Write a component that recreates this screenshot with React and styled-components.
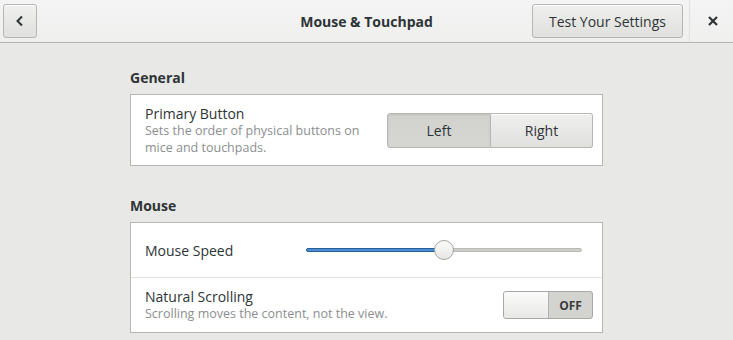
import React from "react";
import styled, { createGlobalStyle } from "styled-components";

const Global = createGlobalStyle`
  html, body { margin: 0; padding: 0; }
  body {
    background: #e8e8e7;
    font-family: "Open Sans", "Noto Sans", sans-serif;
    color: #2e3436;
    width: 733px;
    height: 340px;
    overflow: hidden;
  }
`;

const Window = styled.div`
  display: flex;
  flex-direction: column;
  width: 733px;
  height: 340px;
`;

const HeaderBar = styled.header`
  height: 42px;
  flex: none;
  display: flex;
  align-items: center;
  padding: 0 3px;
  background: linear-gradient(#f4f4f4, #efefee);
  border-bottom: 1px solid #b6b6b3;
  position: relative;
`;

const Button = styled.button`
  height: 34px;
  box-sizing: border-box;
  border: 1px solid #b6b6b3;
  border-radius: 3px;
  background: linear-gradient(#efefee, #e0e0dd);
  box-shadow: inset 0 1px #fff;
  font-family: inherit;
  font-size: 14px;
  color: #2e3436;
  display: flex;
  align-items: center;
  justify-content: center;
  padding: 0 ${(p) => p.$pad ?? 16}px;
  width: ${(p) => (p.$w ? p.$w + "px" : "auto")};
`;

const Title = styled.div`
  position: absolute;
  left: 0;
  right: 0;
  text-align: center;
  font-weight: 700;
  font-size: 14px;
  pointer-events: none;
`;

const Spacer = styled.div`
  flex: 1;
`;

const Separator = styled.div`
  width: 1px;
  align-self: stretch;
  margin: 0 6px 0 6px;
  background: #e0e0de;
`;

const CloseBtn = styled.div`
  width: 34px;
  display: flex;
  align-items: center;
  justify-content: center;
`;

const Content = styled.main`
  flex: 1;
  display: flex;
  flex-direction: column;
  align-items: center;
  padding-top: 26px;
`;

const Column = styled.div`
  width: 473px;
  display: flex;
  flex-direction: column;
`;

const SectionLabel = styled.div`
  font-weight: 700;
  font-size: 14px;
  line-height: 17px;
  margin-bottom: 8px;
  margin-top: ${(p) => p.$top || 0}px;
`;

const Frame = styled.div`
  background: #fff;
  border: 1px solid #b6b6b3;
  display: flex;
  flex-direction: column;
`;

const Row = styled.div`
  display: flex;
  align-items: center;
  padding: 0 9px 0 14px;
  height: ${(p) => p.$h}px;
  border-top: ${(p) => (p.$sep ? "1px solid #e2e2df" : "none")};
`;

const RowText = styled.div`
  flex: 1;
  display: flex;
  flex-direction: column;
  min-width: 0;
`;

const RowTitle = styled.div`
  font-size: 14px;
  line-height: 17px;
`;

const RowSub = styled.div`
  font-size: 12.5px;
  line-height: 17px;
  color: #8b8e8f;
  max-width: ${(p) => (p.$wrap ? "225px" : "none")};
`;

const Linked = styled.div`
  display: flex;
  height: 35px;
`;

const SegButton = styled.button`
  width: ${(p) => p.$w}px;
  box-sizing: border-box;
  border: 1px solid #b6b6b3;
  border-left-width: ${(p) => (p.$first ? 1 : 0)}px;
  border-radius: ${(p) => (p.$first ? "3px 0 0 3px" : "0 3px 3px 0")};
  background: ${(p) =>
    p.$active ? "linear-gradient(#d1d1ce, #d6d6d3)" : "linear-gradient(#efefee, #e0e0dd)"};
  box-shadow: ${(p) => (p.$active ? "inset 0 1px 2px rgba(0,0,0,0.08)" : "inset 0 1px #fff")};
  font-family: inherit;
  font-size: 14px;
  color: #2e3436;
`;

const SliderWrap = styled.div`
  position: relative;
  width: 276px;
  height: 20px;
  margin-right: 11px;
  display: flex;
  align-items: center;
`;

const Track = styled.div`
  width: 100%;
  height: 4px;
  border-radius: 2px;
  background: #cdcdca;
  border: 1px solid #b9b9b6;
  box-sizing: border-box;
  position: relative;
`;

const Fill = styled.div`
  position: absolute;
  left: -1px;
  top: -1px;
  bottom: -1px;
  border-radius: 2px;
  background: #4a90d9;
  border: 1px solid #2a5d96;
  box-sizing: border-box;
`;

const Knob = styled.div`
  position: absolute;
  top: 0;
  width: 20px;
  height: 20px;
  box-sizing: border-box;
  border-radius: 50%;
  border: 1px solid #a5a5a2;
  background: linear-gradient(#fbfbfb, #e6e6e4);
  margin-left: -10px;
`;

const Switch = styled.div`
  width: 90px;
  height: 28px;
  box-sizing: border-box;
  border: 1px solid #a8a8a5;
  border-radius: 3px;
  display: flex;
  background: #d3d3d0;
  overflow: hidden;
`;

const SwitchKnob = styled.div`
  width: 45px;
  box-sizing: border-box;
  border-right: 1px solid #b0b0ad;
  background: linear-gradient(#fbfbfb, #e8e8e6);
`;

const SwitchLabel = styled.div`
  flex: 1;
  display: flex;
  align-items: center;
  justify-content: center;
  font-size: 12px;
  font-weight: 700;
  color: #3a3d3e;
`;

export default function App() {
  const value = 0.5;
  return (
    <>
      <Global />
      <Window>
        <HeaderBar>
          <Button $w={34} $pad={0} aria-label="Back">
            <svg width="16" height="16" viewBox="0 0 16 16">
              <path d="M10 3.5 L5.5 8 L10 12.5" fill="none" stroke="#2e3436" strokeWidth="2" />
            </svg>
          </Button>
          <Title>Mouse &amp; Touchpad</Title>
          <Spacer />
          <Button $w={151} $pad={0}>Test Your Settings</Button>
          <Separator />
          <CloseBtn>
            <svg width="12" height="12" viewBox="0 0 12 12">
              <path d="M2 2 L10 10 M10 2 L2 10" stroke="#2e3436" strokeWidth="2.2" />
            </svg>
          </CloseBtn>
        </HeaderBar>
        <Content>
          <Column>
            <SectionLabel>General</SectionLabel>
            <Frame>
              <Row $h={70}>
                <RowText>
                  <RowTitle>Primary Button</RowTitle>
                  <RowSub $wrap>Sets the order of physical buttons on mice and touchpads.</RowSub>
                </RowText>
                <Linked>
                  <SegButton $first $active $w={104}>Left</SegButton>
                  <SegButton $w={102}>Right</SegButton>
                </Linked>
              </Row>
            </Frame>
            <SectionLabel $top={31}>Mouse</SectionLabel>
            <Frame>
              <Row $h={54}>
                <RowText>
                  <RowTitle>Mouse Speed</RowTitle>
                </RowText>
                <SliderWrap>
                  <Track>
                    <Fill style={{ width: `${value * 100}%` }} />
                  </Track>
                  <Knob style={{ left: `${value * 100}%` }} />
                </SliderWrap>
              </Row>
              <Row $h={54} $sep>
                <RowText>
                  <RowTitle>Natural Scrolling</RowTitle>
                  <RowSub>Scrolling moves the content, not the view.</RowSub>
                </RowText>
                <Switch>
                  <SwitchKnob />
                  <SwitchLabel>OFF</SwitchLabel>
                </Switch>
              </Row>
            </Frame>
          </Column>
        </Content>
      </Window>
    </>
  );
}
